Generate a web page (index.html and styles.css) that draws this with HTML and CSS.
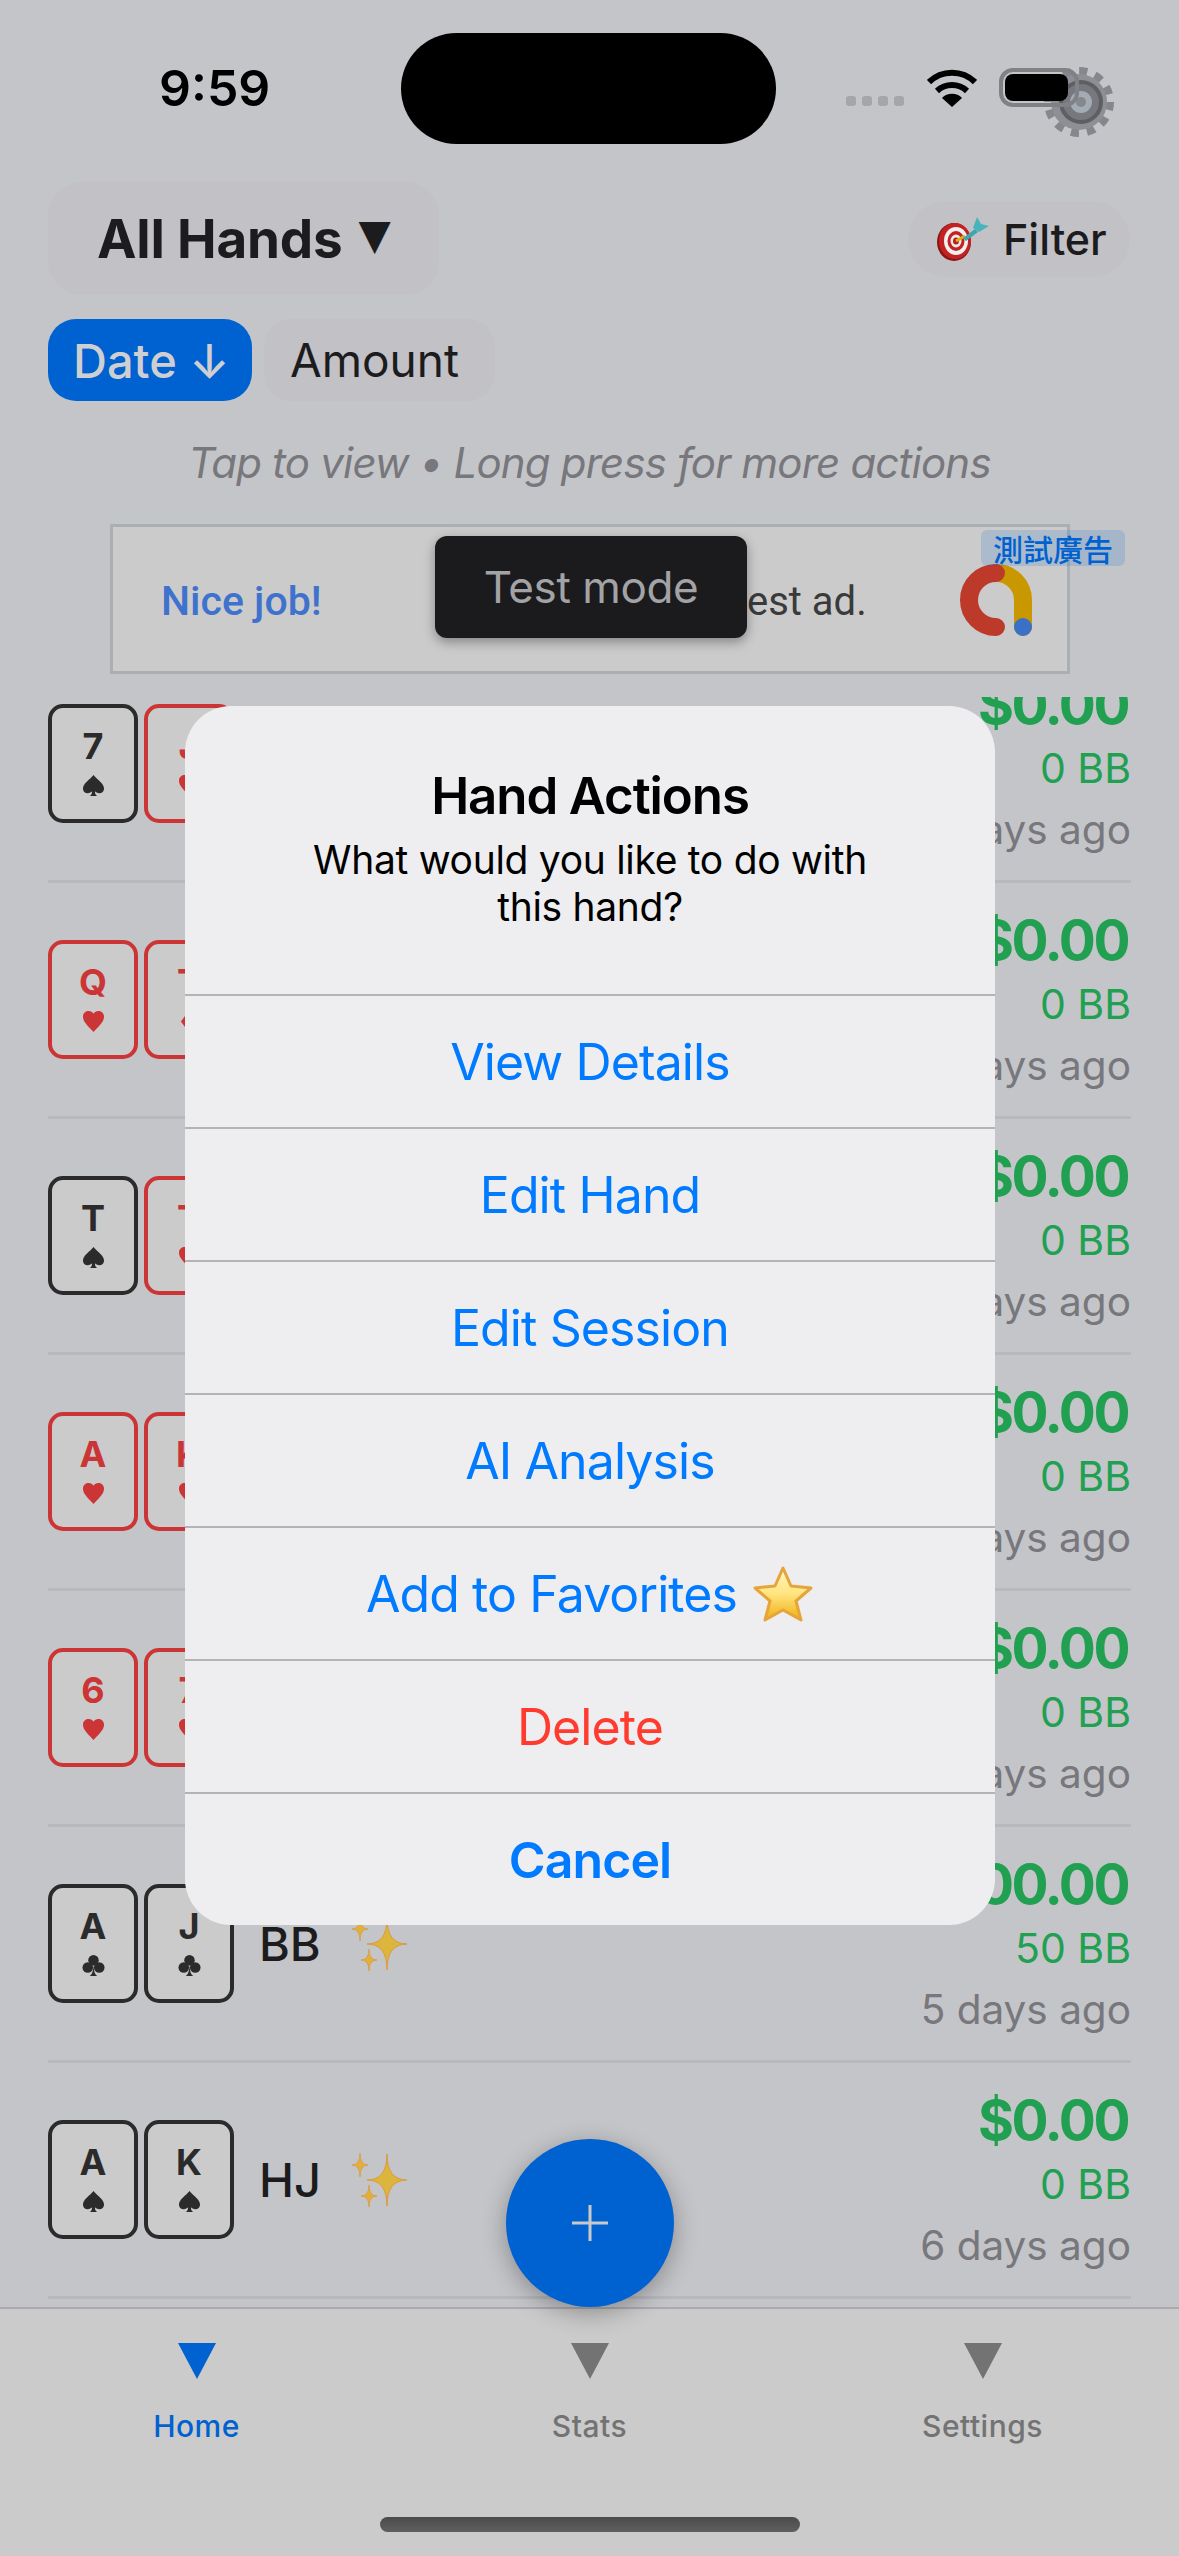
FILE: index.html
```html
<!DOCTYPE html>
<html lang="en">
<head>
    <meta charset="UTF-8">
    <meta name="viewport" content="width=device-width, initial-scale=1.0">
    <title>All Hands</title>
    <link rel="stylesheet" href="styles.css">
</head>
<body>
<div class="screen">
    <svg width="0" height="0" class="defs">
        <defs>
            <linearGradient id="starFill" x1="0" y1="0" x2="0" y2="1">
                <stop offset="0" stop-color="#fff6c4"/>
                <stop offset="0.5" stop-color="#ffe57f"/>
                <stop offset="1" stop-color="#f0ae12"/>
            </linearGradient>
            <g id="sparkles">
                <path d="M35 1Q35 27 55 27Q35 27 35 53Q35 27 15 27Q35 27 35 1Z" fill="#dcb53c" stroke="#dc9a3e" stroke-width="1"/>
                <path d="M8 0Q8 12 16 12Q8 12 8 24Q8 12 0 12Q8 12 8 0Z" fill="#e0b03a" stroke="#dc9a3e" stroke-width="0.8"/>
                <path d="M17 32Q17 43 25 43Q17 43 17 54Q17 43 9 43Q17 43 17 32Z" fill="#e0b03a" stroke="#dc9a3e" stroke-width="0.8"/>
            </g>
            <symbol id="spade" viewBox="0 0 24 24">
                <path d="M12 1C8 6 1 10 1 15C1 18 3 20 6 20C8 20 9.5 19 10.5 18C10.5 20 10 22 8 23H16C14 22 13.5 20 13.5 18C14.5 19 16 20 18 20C21 20 23 18 23 15C23 10 16 6 12 1Z" fill="currentColor"/>
            </symbol>
            <symbol id="heart" viewBox="0 0 24 24">
                <path d="M12 23C8 18 1 13 1 7C1 3 4 1 7 1C9 1 11 2 12 4C13 2 15 1 17 1C20 1 23 3 23 7C23 13 16 18 12 23Z" fill="currentColor"/>
            </symbol>
            <symbol id="club" viewBox="0 0 24 24">
                <circle cx="12" cy="6.5" r="5.5" fill="currentColor"/>
                <circle cx="6" cy="14" r="5.5" fill="currentColor"/>
                <circle cx="18" cy="14" r="5.5" fill="currentColor"/>
                <path d="M12 8C12 17 11 21 8 23H16C13 21 12 17 12 8Z" fill="currentColor"/>
            </symbol>
            <symbol id="diamond" viewBox="0 0 24 24">
                <path d="M12 0L21 12L12 24L3 12Z" fill="currentColor"/>
            </symbol>
        </defs>
    </svg>

    <div class="status">
        <div class="time">9:59</div>
        <div class="island"></div>
        <div class="status-icons">
            <div class="dots"><i></i><i></i><i></i><i></i></div>
            <svg class="wifi" width="50" height="38" viewBox="0 0 50 38">
                <path d="M2 13A33 33 0 0 1 48 13" fill="none" stroke="#000" stroke-width="6"/>
                <path d="M10 22A22 22 0 0 1 40 22" fill="none" stroke="#000" stroke-width="6"/>
                <path d="M25 38L15 29A14 14 0 0 1 35 29Z" fill="#000"/>
            </svg>
            <svg class="gear" width="72" height="72" viewBox="0 0 72 72">
                <circle cx="36" cy="36" r="30" fill="none" stroke="#85878d" stroke-width="10" stroke-dasharray="7.85 7.85"/>
                <circle cx="36" cy="36" r="28" fill="#8d8f95"/>
                <circle cx="38" cy="36" r="22" fill="#5e5e64"/>
                <circle cx="38" cy="36" r="18" fill="#77787e"/>
                <circle cx="38" cy="36" r="11" fill="#a3abb5"/>
                <circle cx="38" cy="36" r="5" fill="#87888d"/>
            </svg>
            <div class="battery"><div class="battery-fill"></div></div>
        </div>
    </div>

    <div class="header">
        <div class="title-pill">All Hands <span class="caret">▼</span></div>
        <div class="filter-pill">
            <svg width="54" height="44" viewBox="0 0 54 44">
                <ellipse cx="19" cy="25" rx="17" ry="19" fill="#8e1414"/>
                <ellipse cx="20" cy="24" rx="16" ry="18" fill="#c22222"/>
                <ellipse cx="21" cy="24" rx="12" ry="14" fill="#f1eeee"/>
                <ellipse cx="21" cy="24" rx="8.5" ry="10" fill="#c22222"/>
                <ellipse cx="21" cy="24" rx="5.5" ry="6.5" fill="#efe8e8"/>
                <ellipse cx="21" cy="24" rx="3" ry="3.5" fill="#b81f1f"/>
                <path d="M21 24L30 19" stroke="#d8b01e" stroke-width="3"/>
                <path d="M28 21L40 12L43 15L31 24Z" fill="#3fa5ad"/>
                <path d="M38 11L42 0L46 7L54 9L44 15Z" fill="#46b4bc"/>
            </svg>
            <span>Filter</span>
        </div>
    </div>

    <div class="sort-row">
        <div class="sort-pill active">Date ↓</div>
        <div class="sort-pill">Amount</div>
    </div>

    <p class="hint">Tap to view • Long press for more actions</p>

    <div class="ad">
        <span class="ad-title">Nice job!</span>
        <span class="ad-text">est ad.</span>
        <svg class="ad-logo" width="74" height="74" viewBox="0 0 74 74">
            <path d="M37 10A27 27 0 0 1 64 37V64" fill="none" stroke="#c99700" stroke-width="18" stroke-linecap="round"/>
            <path d="M37 10A27 27 0 0 0 37 64" fill="none" stroke="#bd3a2a" stroke-width="18" stroke-linecap="round"/>
            <circle cx="64" cy="64" r="9" fill="#3b70c8"/>
        </svg>
        <span class="ad-badge">測試廣告</span>
        <div class="toast">Test mode</div>
    </div>

    <div class="list">
        <div class="list-inner">
            <div class="row">
                <div class="card black"><b>7</b><svg class="suit"><use href="#spade"/></svg></div>
                <div class="card red"><b>J</b><svg class="suit"><use href="#heart"/></svg></div>
                <div class="result"><div class="amount">$0.00</div><div class="bb">0 BB</div><div class="date">4 days ago</div></div>
            </div>
            <div class="row">
                <div class="card red"><b>Q</b><svg class="suit"><use href="#heart"/></svg></div>
                <div class="card red"><b>T</b><svg class="suit"><use href="#diamond"/></svg></div>
                <div class="result"><div class="amount">$0.00</div><div class="bb">0 BB</div><div class="date">4 days ago</div></div>
            </div>
            <div class="row">
                <div class="card black"><b>T</b><svg class="suit"><use href="#spade"/></svg></div>
                <div class="card red"><b>T</b><svg class="suit"><use href="#heart"/></svg></div>
                <div class="result"><div class="amount">$0.00</div><div class="bb">0 BB</div><div class="date">4 days ago</div></div>
            </div>
            <div class="row">
                <div class="card red"><b>A</b><svg class="suit"><use href="#heart"/></svg></div>
                <div class="card red"><b>K</b><svg class="suit"><use href="#heart"/></svg></div>
                <div class="result"><div class="amount">$0.00</div><div class="bb">0 BB</div><div class="date">4 days ago</div></div>
            </div>
            <div class="row">
                <div class="card red"><b>6</b><svg class="suit"><use href="#heart"/></svg></div>
                <div class="card red"><b>7</b><svg class="suit"><use href="#heart"/></svg></div>
                <div class="result"><div class="amount">$0.00</div><div class="bb">0 BB</div><div class="date">4 days ago</div></div>
            </div>
            <div class="row">
                <div class="card black"><b>A</b><svg class="suit"><use href="#club"/></svg></div>
                <div class="card black"><b>J</b><svg class="suit"><use href="#club"/></svg></div>
                <div class="position">BB</div>
                <svg class="sparkle" width="56" height="54" viewBox="0 0 56 54"><use href="#sparkles"/></svg>
                <div class="result"><div class="amount">$100.00</div><div class="bb">50 BB</div><div class="date">5 days ago</div></div>
            </div>
            <div class="row">
                <div class="card black"><b>A</b><svg class="suit"><use href="#spade"/></svg></div>
                <div class="card black"><b>K</b><svg class="suit"><use href="#spade"/></svg></div>
                <div class="position">HJ</div>
                <svg class="sparkle" width="56" height="54" viewBox="0 0 56 54"><use href="#sparkles"/></svg>
                <div class="result"><div class="amount">$0.00</div><div class="bb">0 BB</div><div class="date">6 days ago</div></div>
            </div>
        </div>
    </div>

    <div class="tabs">
        <div class="tab-items">
            <div class="tab active"><i class="tab-icon"></i><span>Home</span></div>
            <div class="tab"><i class="tab-icon"></i><span>Stats</span></div>
            <div class="tab"><i class="tab-icon"></i><span>Settings</span></div>
        </div>
        <div class="home-bar"></div>
    </div>

    <div class="fab">
        <svg width="36" height="36" viewBox="0 0 36 36"><path d="M18 0V36M0 18H36" stroke="#c9c9c9" stroke-width="3"/></svg>
    </div>

    <div class="alert">
        <div class="alert-head">
            <h2>Hand Actions</h2>
            <p>What would you like to do with this hand?</p>
        </div>
        <div class="alert-btn">View Details</div>
        <div class="alert-btn">Edit Hand</div>
        <div class="alert-btn">Edit Session</div>
        <div class="alert-btn">AI Analysis</div>
        <div class="alert-btn">Add to Favorites
            <svg width="62" height="58" viewBox="0 0 62 58"><path d="M31 3L39 21L59 23L44 36L49 55L31 45L13 55L18 36L3 23L23 21Z" fill="url(#starFill)" stroke="#e6a53a" stroke-width="3" stroke-linejoin="round"/></svg>
        </div>
        <div class="alert-btn danger">Delete</div>
        <div class="alert-btn cancel">Cancel</div>
    </div>
</div>
</body>
</html>
```

FILE: styles.css
```css
body {
    margin: 0;
    font-family: Inter, "Noto Sans", sans-serif;
    color: #1c1c1e;
}
.screen {
    position: relative;
    width: 1179px;
    height: 2556px;
    overflow: hidden;
    background-color: #c4c5c9;
    display: flex;
    flex-direction: column;
}
.defs {
    position: absolute;
}

/* status bar */
.status {
    height: 182px;
    box-sizing: border-box;
    padding: 33px 0 0 159px;
    display: flex;
    align-items: flex-start;
    flex-shrink: 0;
}
.time {
    width: 242px;
    margin-top: 25px;
    font-size: 50px;
    line-height: 60px;
    font-weight: 600;
    color: #000;
}
.island {
    width: 375px;
    height: 111px;
    background-color: #000;
    border-radius: 56px;
}
.status-icons {
    position: relative;
    display: flex;
    align-items: flex-start;
    margin-left: 70px;
    padding-top: 35px;
}
.dots {
    display: flex;
    gap: 6px;
    margin-top: 28px;
}
.dots i {
    width: 10px;
    height: 10px;
    border-radius: 3px;
    background-color: #a5a6a9;
}
.wifi {
    margin-left: 23px;
    margin-top: 1px;
}
.gear {
    position: absolute;
    left: 197px;
    top: 33px;
}
.battery {
    position: relative;
    width: 80px;
    height: 39px;
    box-sizing: border-box;
    margin-left: 22px;
    border: 4px solid #808185;
    border-radius: 14px;
    padding: 2px;
}
.battery-fill {
    width: 63px;
    height: 27px;
    background-color: #000;
    border-radius: 8px;
}

/* header */
.header {
    display: flex;
    justify-content: space-between;
    align-items: center;
    padding: 0 49px 0 48px;
    height: 113px;
    flex-shrink: 0;
}
.title-pill {
    width: 391px;
    height: 113px;
    box-sizing: border-box;
    padding-left: 49px;
    display: flex;
    align-items: center;
    gap: 16px;
    background-color: #c2c1c6;
    border-radius: 34px;
    font-size: 53px;
    font-weight: 700;
    letter-spacing: -0.2px;
}
.caret {
    font-family: "DejaVu Sans", sans-serif;
    font-size: 42px;
    margin-top: -8px;
}
.filter-pill {
    width: 222px;
    height: 76px;
    box-sizing: border-box;
    padding-left: 27px;
    display: flex;
    align-items: center;
    gap: 14px;
    background-color: #c2c1c6;
    border-radius: 38px;
    font-size: 43px;
    font-weight: 500;
}
.sort-row {
    display: flex;
    gap: 12px;
    margin: 24px 0 0 48px;
    flex-shrink: 0;
}
.sort-pill {
    height: 82px;
    box-sizing: border-box;
    padding: 0 36px 0 26px;
    display: flex;
    align-items: center;
    background-color: #c2c1c6;
    border-radius: 28px;
    font-size: 46px;
}
.sort-pill.active {
    width: 204px;
    padding: 0 0 0 25px;
    background-color: #0062d1;
    color: #cfcfd1;
    font-size: 47px;
    font-weight: 500;
}
.hint {
    margin: 37px 0 0 0;
    text-align: center;
    font-size: 42px;
    line-height: 50px;
    font-style: italic;
    letter-spacing: -0.8px;
    color: #77777c;
    flex-shrink: 0;
}

/* ad banner */
.ad {
    position: relative;
    width: 960px;
    height: 150px;
    box-sizing: border-box;
    margin: 36px 0 0 110px;
    background-color: #cbcbcb;
    border: 3px solid #a9afb3;
    flex-shrink: 0;
}
.ad-title {
    position: absolute;
    left: 48px;
    top: 49px;
    font-family: Roboto, sans-serif;
    font-size: 41px;
    line-height: 50px;
    font-weight: 500;
    color: #3e72cc;
}
.ad-text {
    position: absolute;
    left: 634px;
    top: 50px;
    font-family: Roboto, sans-serif;
    font-size: 40px;
    line-height: 50px;
    color: #3a3a3b;
}
.ad-logo {
    position: absolute;
    left: 846px;
    top: 36px;
}
.ad-badge {
    position: absolute;
    left: 868px;
    top: 3px;
    width: 144px;
    height: 36px;
    text-align: center;
    background-color: rgba(0, 98, 209, 0.15);
    border-radius: 6px;
    font-family: "Noto Sans CJK TC", sans-serif;
    font-size: 30px;
    font-weight: 500;
    line-height: 36px;
    color: #0062d1;
}
.toast {
    position: absolute;
    left: 322px;
    top: 9px;
    width: 312px;
    height: 102px;
    display: flex;
    align-items: center;
    justify-content: center;
    background-color: #1b1b1d;
    border-radius: 12px;
    box-shadow: 0 4px 12px rgba(0, 0, 0, 0.35);
    font-size: 44px;
    letter-spacing: -0.4px;
    color: #a3a3a5;
}

/* hand list */
.list {
    flex: 1;
    margin-top: 23px;
    overflow: hidden;
}
.list-inner {
    margin-top: -50px;
}
.row {
    height: 236px;
    box-sizing: border-box;
    margin: 0 48px;
    display: flex;
    align-items: center;
    gap: 6px;
    border-bottom: 3px solid #b8b8bd;
}
.card {
    width: 90px;
    height: 119px;
    box-sizing: border-box;
    flex-shrink: 0;
    display: flex;
    flex-direction: column;
    align-items: center;
    background-color: #cbcbcb;
    border: 4px solid #2b2b2b;
    border-radius: 15px;
    color: #2b2b2b;
}
.card.red {
    border-color: #cc3535;
    color: #cc3535;
}
.card b {
    margin-top: 23px;
    font-size: 36px;
    line-height: 30px;
    font-weight: 700;
}
.suit {
    width: 23px;
    height: 23px;
    margin-top: 13px;
}
.position {
    margin-left: 19px;
    font-size: 47px;
    font-weight: 500;
}
.sparkle {
    margin-left: 25px;
}
.result {
    margin-left: auto;
    margin-top: -2px;
    text-align: right;
    white-space: nowrap;
}
.amount {
    margin-right: 3px;
    font-size: 55px;
    line-height: 64px;
    font-weight: 700;
    letter-spacing: -2.5px;
    color: #22a052;
}
.bb {
    margin-top: 8px;
    font-size: 41px;
    line-height: 48px;
    color: #22a052;
}
.date {
    margin-top: 14px;
    font-size: 40.5px;
    line-height: 48px;
    color: #77777c;
}

/* tab bar */
.tabs {
    height: 249px;
    box-sizing: border-box;
    flex-shrink: 0;
    display: flex;
    flex-direction: column;
    align-items: center;
    background-color: #cbcbcb;
    border-top: 2px solid #aaabad;
}
.tab-items {
    width: 100%;
    display: flex;
    padding-top: 34px;
}
.tab {
    flex: 1;
    display: flex;
    flex-direction: column;
    align-items: center;
    font-size: 30px;
    line-height: 36px;
    font-weight: 500;
    letter-spacing: 0.5px;
    color: #737373;
}
.tab.active {
    color: #0062d1;
}
.tab-icon {
    width: 0;
    height: 0;
    margin-bottom: 29px;
    border-left: 19px solid transparent;
    border-right: 19px solid transparent;
    border-top: 36px solid currentColor;
}
.home-bar {
    width: 420px;
    height: 15px;
    margin-top: 73px;
    border-radius: 8px;
    background: linear-gradient(#4b4b4b, #5f5f5f);
}
.fab {
    position: absolute;
    left: 506px;
    top: 2139px;
    width: 168px;
    height: 168px;
    display: flex;
    align-items: center;
    justify-content: center;
    background-color: #0062d1;
    border-radius: 50%;
    box-shadow: 0 6px 24px rgba(0, 0, 0, 0.3);
}

/* alert */
.alert {
    position: absolute;
    left: 185px;
    top: 706px;
    width: 810px;
    height: 1219px;
    background-color: #eeeef0;
    border-radius: 46px;
    overflow: hidden;
    color: #000;
    text-align: center;
}
.alert-head {
    height: 288px;
    box-sizing: border-box;
    padding: 60px 120px 0;
}
.alert-head h2 {
    margin: 0;
    font-size: 51px;
    line-height: 60px;
    font-weight: 600;
    letter-spacing: -1.1px;
}
.alert-head p {
    margin: 10px 0 0 0;
    font-size: 39px;
    line-height: 47px;
    letter-spacing: -0.3px;
}
.alert-btn {
    height: 133px;
    box-sizing: border-box;
    border-top: 2px solid #b4b4b6;
    display: flex;
    align-items: center;
    justify-content: center;
    gap: 15px;
    font-size: 50px;
    letter-spacing: -0.9px;
    color: #007aff;
}
.alert-btn.danger {
    color: #ff3b30;
}
.alert-btn.cancel {
    font-weight: 600;
}
```
